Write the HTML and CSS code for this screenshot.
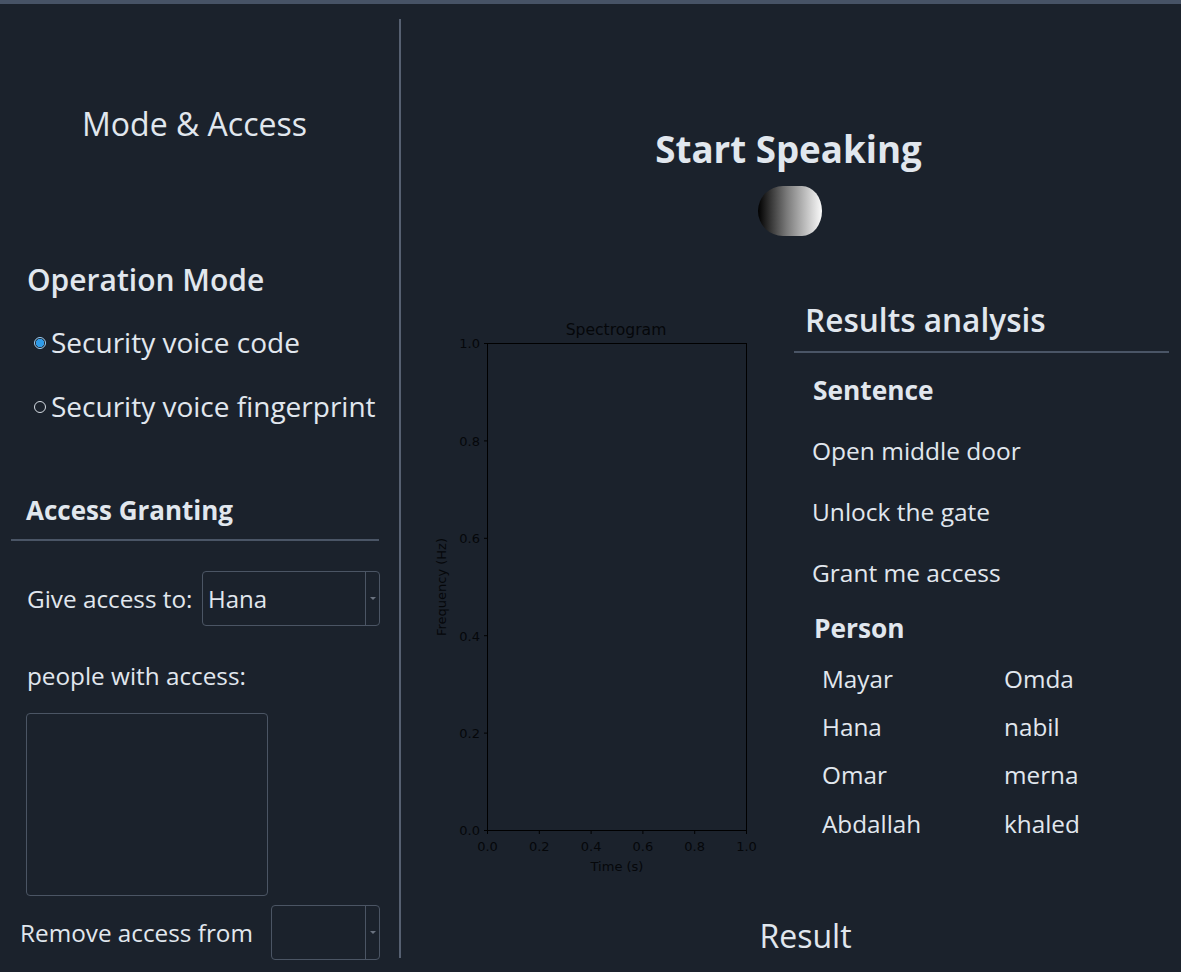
FILE: index.html
```html
<!DOCTYPE html>
<html lang="en">
<head>
<meta charset="utf-8">
<title>Voice Access</title>
<link rel="stylesheet" href="styles.css">
</head>
<body>
<div class="window">
  <aside class="left">
    <h1 class="panel-title">Mode &amp; Access</h1>
    <h2 class="section op">Operation Mode</h2>
    <div class="radio r1"><span class="dot checked"></span><span>Security voice code</span></div>
    <div class="radio r2"><span class="dot"></span><span>Security voice fingerprint</span></div>
    <h2 class="section ag">Access Granting</h2>
    <div class="rule-left"></div>
    <div class="field give">
      <span class="lbl">Give access to:</span>
      <div class="combo combo-give"><span class="val">Hana</span><span class="drop"><i class="arrow"></i></span></div>
    </div>
    <div class="lbl people">people with access:</div>
    <div class="listbox"></div>
    <div class="field remove">
      <span class="lbl">Remove access from</span>
      <div class="combo combo-remove"><span class="val"></span><span class="drop"><i class="arrow"></i></span></div>
    </div>
  </aside>
  <div class="vdivider"></div>
  <main class="right">
    <h1 class="start">Start Speaking</h1>
    <div class="toggle-wrap"><div class="toggle"></div></div>
    <div class="content">
      <svg class="plot" width="340" height="570" viewBox="0 0 340 570" xmlns="http://www.w3.org/2000/svg">
        <g fill="none" stroke="#000" stroke-width="1">
          <rect x="67.5" y="33.5" width="259" height="487"/>
          <path d="M64 33.5H67.5M64 130.9H67.5M64 228.3H67.5M64 325.7H67.5M64 423.1H67.5M64 520.5H67.5"/>
          <path d="M67.5 520.5V524M119.3 520.5V524M171.1 520.5V524M222.9 520.5V524M274.7 520.5V524M326.5 520.5V524"/>
        </g>
        <g class="ticks" fill="#05070a" font-size="13" text-anchor="end">
          <text x="60" y="38">1.0</text>
          <text x="60" y="135.5">0.8</text>
          <text x="60" y="233">0.6</text>
          <text x="60" y="330.5">0.4</text>
          <text x="60" y="428">0.2</text>
          <text x="60" y="525">0.0</text>
        </g>
        <g class="ticks" fill="#05070a" font-size="13" text-anchor="middle">
          <text x="67.5" y="541">0.0</text>
          <text x="119.3" y="541">0.2</text>
          <text x="171.1" y="541">0.4</text>
          <text x="222.9" y="541">0.6</text>
          <text x="274.7" y="541">0.8</text>
          <text x="326.5" y="541">1.0</text>
          <text x="197" y="561">Time (s)</text>
          <text x="196" y="25" font-size="15.6">Spectrogram</text>
          <text transform="translate(26 277) rotate(-90)">Frequency (Hz)</text>
        </g>
      </svg>
      <section class="results">
        <h2 class="res-title">Results analysis</h2>
        <div class="rule-right"></div>
        <h3 class="sub sentence">Sentence</h3>
        <div class="item first">Open middle door</div>
        <div class="item">Unlock the gate</div>
        <div class="item">Grant me access</div>
        <h3 class="sub person">Person</h3>
        <div class="people-grid">
          <span>Mayar</span><span>Omda</span>
          <span>Hana</span><span>nabil</span>
          <span>Omar</span><span>merna</span>
          <span>Abdallah</span><span>khaled</span>
        </div>
      </section>
    </div>
    <div class="result-label">Result</div>
  </main>
</div>
</body>
</html>
```
FILE: styles.css
```css
html, body {
  margin: 0;
  padding: 0;
  background: #1b222c;
  width: 1181px;
  height: 972px;
  overflow: hidden;
}
body {
  font-family: "Open Sans", "Noto Sans", sans-serif;
  color: #e1e7ee;
}
.window {
  display: flex;
  height: 968px;
  border-top: 4px solid #475366;
}
.left {
  width: 399px;
  display: flex;
  flex-direction: column;
}
.vdivider {
  width: 2px;
  background: #566071;
  margin: 15px 0 14px;
}
.right {
  width: 780px;
  display: flex;
  flex-direction: column;
}
h1, h2, h3 { margin: 0; font-weight: normal; }

.panel-title {
  margin-top: 100px;
  height: 40px;
  line-height: 40px;
  font-size: 32px;
  text-align: center;
  padding-right: 10px;
}
.section {
  height: 40px;
  line-height: 40px;
}
.section.op {
  margin-top: 116px;
  padding-left: 27px;
  font-size: 30px;
  font-weight: 600;
}
.radio {
  height: 40px;
  display: flex;
  align-items: center;
  padding-left: 34px;
  font-size: 28px;
}
.radio.r1 { margin-top: 22px; }
.radio.r2 { margin-top: 24px; }
.dot {
  width: 12px;
  height: 12px;
  box-sizing: border-box;
  border-radius: 50%;
  border: 1px solid #d5dbe2;
  margin-right: 5px;
  margin-top: 1px;
}
.dot.checked {
  border: 1px solid #9fd0f5;
  background: radial-gradient(circle, #2f9be8 0 3.8px, #1b222c 4.5px);
}
.section.ag {
  margin-top: 64px;
  padding-left: 26px;
  font-size: 26px;
  font-weight: 700;
}
.rule-left {
  margin: 9px 20px 0 11px;
  height: 2px;
  background: #4a5566;
}
.field {
  height: 55px;
  display: flex;
  align-items: center;
  padding-right: 19px;
}
.field.give { margin-top: 30px; padding-left: 27px; }
.field.remove { margin-top: 9px; padding-left: 20px; }
.lbl { font-size: 24.3px; }
.combo {
  margin-left: auto;
  height: 55px;
  box-sizing: border-box;
  border: 1px solid #4b5564;
  border-radius: 4px;
  display: flex;
}
.combo-give { width: 178px; }
.combo-remove { width: 109px; }
.combo .val {
  flex: 1;
  font-size: 24px;
  line-height: 53px;
  padding-left: 5px;
}
.drop {
  width: 13px;
  border-left: 1px solid #4b5564;
  display: flex;
  align-items: center;
  justify-content: center;
}
.arrow {
  width: 0;
  height: 0;
  border-left: 3px solid transparent;
  border-right: 3px solid transparent;
  border-top: 3px solid #6b7380;
}
.people {
  margin-top: 30px;
  height: 40px;
  line-height: 40px;
  padding-left: 27px;
}
.listbox {
  margin: 17px 0 0 26px;
  width: 242px;
  height: 183px;
  box-sizing: border-box;
  border: 1px solid #4b5564;
  border-radius: 4px;
}

/* right */
.start {
  margin-top: 120px;
  height: 50px;
  line-height: 50px;
  font-size: 36.7px;
  font-weight: 700;
  text-align: center;
  padding-right: 5px;
}
.toggle-wrap {
  margin-top: 12px;
  display: flex;
  justify-content: center;
  padding-right: 3px;
}
.toggle {
  width: 64px;
  height: 50px;
  border-radius: 25px 20px 20px 25px / 25px;
  background: linear-gradient(90deg, #000 0%, #7a7a7a 45%, #fafafa 100%);
}
.content {
  margin-top: 64px;
  height: 616px;
  display: flex;
}
.plot {
  margin: 10px 0 0 19px;
  font-family: "DejaVu Sans", sans-serif;
}
.results {
  margin-left: 34px;
  width: 375px;
}
.res-title {
  height: 40px;
  line-height: 40px;
  padding-left: 11px;
  font-size: 31.6px;
  font-weight: 600;
}
.rule-right {
  margin-top: 11px;
  height: 2px;
  background: #4a5566;
}
.sub {
  height: 40px;
  line-height: 40px;
  font-size: 26.3px;
  font-weight: 700;
}
.sub.sentence { margin-top: 17px; padding-left: 19px; }
.sub.person { margin-top: 15px; padding-left: 20px; }
.item {
  height: 40px;
  line-height: 40px;
  margin-top: 21px;
  padding-left: 18px;
  font-size: 24.5px;
}
.people-grid {
  margin-top: 6px;
  padding-left: 28px;
  display: grid;
  grid-template-columns: 182px 1fr;
  grid-auto-rows: 48.3px;
  align-items: center;
  font-size: 24.3px;
}
.result-label {
  height: 40px;
  line-height: 40px;
  font-size: 32px;
  text-align: center;
  padding-left: 29px;
}
```
